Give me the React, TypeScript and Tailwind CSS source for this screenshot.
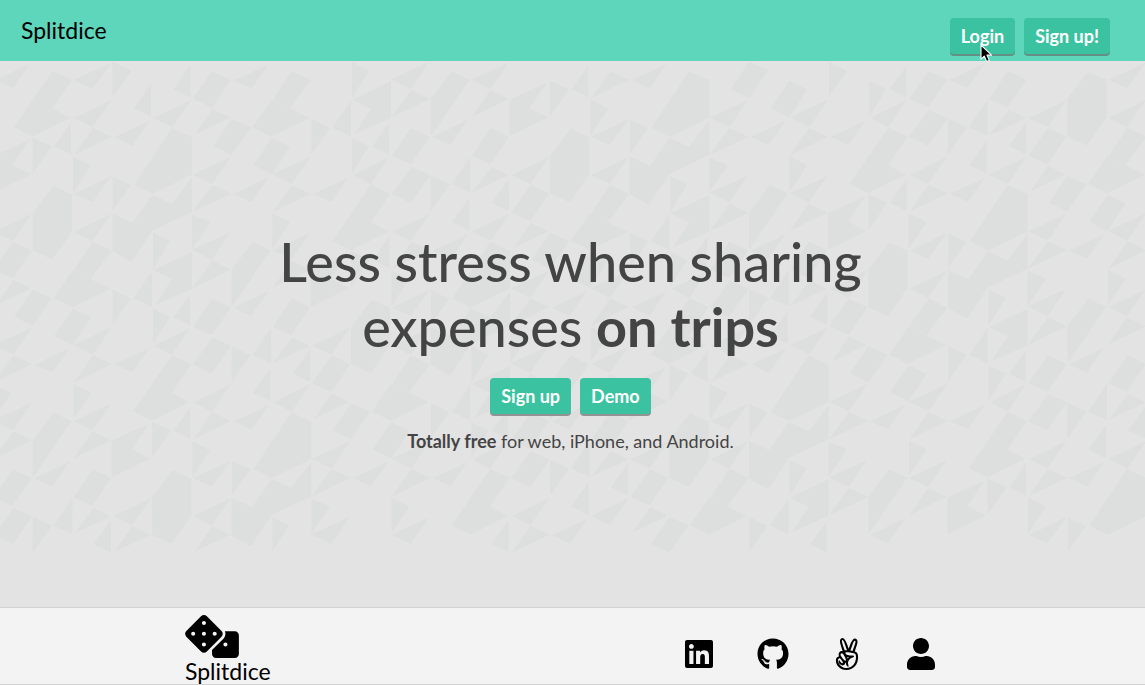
import React from "react";
import { FaAngellist, FaDice, FaGithub, FaLinkedin, FaUser } from "react-icons/fa";

// One repeat of the background motif, in thirds of a pixel.
const SHAPES: string[] = [
  "157,40 215,66 155,150 208,180 97,236 42,207",
  "220,66 333,15 277,94",
  "337,12 393,40 337,117",
  "222,180 333,128 277,208",
  "569,25 569,118 520,94",
  "453,80 453,176 402,152",
  "460,180 569,128 516,207",
  "637,40 693,66 635,148 580,124",
  "700,68 805,20 755,91",
  "877,40 933,67 868,150 820,125",
  "815,125 868,150 928,180 815,236 757,208",
  "637,157 688,180 587,228",
  "697,184 753,208 695,291 642,265",
  "817,240 870,266 817,348 762,321",
  "213,193 213,289 163,265",
  "279,210 333,236 222,291",
  "343,237 447,190 398,262",
  "516,210 576,238 576,350 457,408 402,380",
  "-23,295 88,246 37,321 91,350 -23,405",
  "98,240 154,266 98,347",
  "220,296 272,322 220,404",
  "583,350 692,297 637,378",
  "822,350 932,296 876,378",
  "222,408 333,355 277,433",
  "338,356 393,381 338,458",
  "637,380 693,407 580,461",
  "703,408 805,360 754,432",
  "877,380 930,407 820,462",
  "160,383 216,409 216,520 156,604 98,578 98,465",
  "576,358 576,462 457,518 395,612 337,580 337,466 398,494 457,410 516,437",
  "-18,522 95,468 38,549",
  "221,522 333,468 277,550",
  "576,470 631,494 576,574",
  "817,470 870,494 817,572",
  "40,552 95,578 40,660 -18,633",
  "277,552 335,578 273,662 222,638",
  "459,527 510,550 459,633",
  "581,578 690,525 636,605",
  "760,552 811,578 697,745 697,636",
  "576,582 576,692 466,740 516,664 460,637",
  "637,607 693,635 580,690",
  "216,640 270,665 328,692 220,747 162,720",
  "40,665 91,690 -10,738",
  "98,695 154,721 98,803 43,776",
  "338,695 393,721 338,800",
  "456,640 456,747 400,721",
  "218,752 271,777 215,860 163,833",
  "459,752 510,777 459,858",
  "570,708 570,802 520,777",
  "636,722 693,748 636,830 580,804",
  "703,748 805,700 754,772",
  "877,722 930,748 874,830 821,804",
  "-20,862 95,809 40,890",
  "220,861 333,808 277,890",
  "463,863 570,809 516,891",
  "637,838 693,863 636,946 580,920",
  "697,865 752,891 697,970",
  "814,811 814,916 757,891",
  "877,838 928,863 822,914",
  "40,892 97,919 -20,973",
  "104,920 208,870 157,944",
  "279,892 335,919 222,973",
  "343,919 447,871 397,944",
  "517,892 574,919 516,1004 567,1033 457,1088 402,1060",
  "220,978 271,1003 220,1083",
  "-20,982 33,1003 -20,1083",
  "583,1033 692,979 637,1060",
  "810,932 810,1028 760,1003",
  "-20,1087 93,1036 40,1116",
  "220,1089 333,1037 277,1117",
  "160,1064 215,1089 98,1256 98,1147",
  "457,1092 512,1117 457,1198",
  "570,1049 570,1141 521,1117",
  "637,1063 694,1089 580,1144",
  "703,1090 805,1042 754,1116",
  "822,1032 932,979 876,1060",
  "40,1120 96,1147 -18,1198",
  "277,1120 333,1147 220,1202",
  "337,1147 447,1098 393,1173 450,1202 337,1258",
  "577,1151 631,1177 577,1254",
  "40,1235 95,1261 38,1343 -18,1318",
  "103,1261 208,1211 156,1286",
  "277,1235 333,1261 277,1343 221,1318",
  "580,1260 692,1208 635,1286",
  "698,1209 750,1235 698,1305",
  "216,1321 216,1428 161,1402",
  "40,1352 95,1377 38,1458 -18,1430",
  "98,1377 154,1402 98,1482",
  "279,1352 330,1376 222,1427",
  "333,1386 333,1480 283,1457",
  "343,1374 452,1321 398,1401",
  "397,1405 452,1430 343,1482",
  "581,1375 692,1321 636,1400",
  "637,1405 690,1430 583,1482",
  "817,1377 868,1402 817,1480",
];

const STEP_A = [955, 341];
const STEP_B = [-597, 512];
const TOP = 8;
const BOTTOM = 1485;
const RIGHT = 7680;

function buildPattern(): string {
  const parts: string[] = [];
  for (const shape of SHAPES) {
    const points = shape.split(" ").map((p) => p.split(",").map(Number));
    for (let a = -8; a <= 10; a++) {
      for (let b = -10; b <= 8; b++) {
        const dx = a * STEP_A[0] + b * STEP_B[0];
        const dy = a * STEP_A[1] + b * STEP_B[1];
        const moved = points.map(([x, y]) => [x + dx, y + dy]);
        const inside =
          moved.every(([, y]) => y >= TOP && y <= BOTTOM) &&
          moved.some(([x]) => x > 0 && x < RIGHT);
        if (inside) parts.push("M" + moved.map((p) => p.join(" ")).join("L") + "Z");
      }
    }
  }
  return parts.join("");
}

const PATTERN = buildPattern();

function Backdrop() {
  return (
    <svg aria-hidden="true" className="absolute inset-0 h-full w-full" fill="#dddfde">
      <g transform="translate(0 -3) scale(0.33333)">
        <path d={PATTERN} fillRule="nonzero" />
      </g>
    </svg>
  );
}

function Button({ children }: { children: React.ReactNode }) {
  return (
    <button
      type="button"
      className="h-9 rounded bg-[#3bc2a0] px-[11px] text-lg leading-9 font-bold whitespace-nowrap text-white shadow-[0_2px_0_rgba(105,105,105,0.65)]"
    >
      {children}
    </button>
  );
}

function Cursor() {
  return (
    <svg aria-hidden="true" className="absolute top-[26px] left-[30px]" width="13" height="19" viewBox="0 0 13 19">
      <path
        d="M1 1v14.2l3.3-3.1 2.3 5.4 2.7-1.1-2.3-5.3h4.6z"
        fill="#000"
        stroke="#fff"
        strokeWidth="1.1"
        strokeLinejoin="round"
      />
    </svg>
  );
}

const LINKS = [
  { label: "LinkedIn", Icon: FaLinkedin },
  { label: "GitHub", Icon: FaGithub },
  { label: "AngelList", Icon: FaAngellist },
  { label: "Portfolio", Icon: FaUser },
];

export default function App() {
  return (
    <div className="flex min-h-screen flex-col bg-[#e3e3e3] font-['Lato',sans-serif] text-[#444]">
      <header className="flex items-start justify-between bg-[#5dd6bb] pr-[35px] pb-[7px] pl-[21px]">
        <a href="#" className="pt-4 text-[23px] leading-7 text-black">
          Splitdice
        </a>
        <nav className="flex gap-[9px] pt-[18px]">
          <div className="relative flex">
            <Button>Login</Button>
            <Cursor />
          </div>
          <Button>Sign up!</Button>
        </nav>
      </header>

      <main className="relative flex flex-1 flex-col items-center overflow-hidden pt-[168px] pr-1 text-center">
        <Backdrop />
        <div className="relative flex flex-col items-center">
          <h1 className="max-w-[640px] text-[54px] leading-[65px] font-medium">
            Less stress when sharing expenses <b className="font-bold">on trips</b>
          </h1>
          <div className="mt-[19px] flex gap-[9px]">
            <Button>Sign up</Button>
            <Button>Demo</Button>
          </div>
          <p className="mt-[15px] text-lg leading-6">
            <b>Totally free</b> for web, iPhone, and Android.
          </p>
        </div>
      </main>

      <footer className="border-y border-[#d2d2d2] bg-[#f3f3f3] text-black">
        <div className="mx-auto flex max-w-[775px] justify-between pr-[23px]">
          <a href="#" className="flex flex-col pt-[7px]">
            <FaDice className="h-[43px] w-[54px]" aria-hidden="true" />
            <span className="text-[23px] leading-[26px]">Splitdice</span>
          </a>
          <nav className="flex items-start gap-[42px] pt-[30px]">
            {LINKS.map(({ label, Icon }) => (
              <a key={label} href="#" aria-label={label}>
                <Icon className="size-8" />
              </a>
            ))}
          </nav>
        </div>
      </footer>
    </div>
  );
}
